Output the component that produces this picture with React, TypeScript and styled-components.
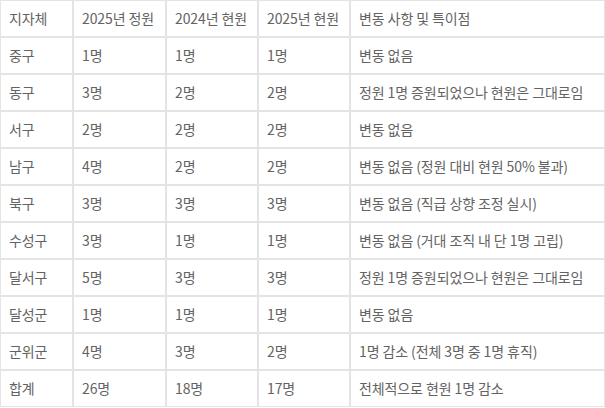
import React from "react";
import styled, { createGlobalStyle } from "styled-components";

const GlobalStyle = createGlobalStyle`
  html, body {
    margin: 0;
    padding: 0;
    background: #ffffff;
  }
  * {
    box-sizing: border-box;
  }
`;

type Row = {
  region: string;
  quota: string;
  prev: string;
  current: string;
  note: string;
};

const rows: Row[] = [
  { region: "중구", quota: "1명", prev: "1명", current: "1명", note: "변동 없음" },
  { region: "동구", quota: "3명", prev: "2명", current: "2명", note: "정원 1명 증원되었으나 현원은 그대로임" },
  { region: "서구", quota: "2명", prev: "2명", current: "2명", note: "변동 없음" },
  { region: "남구", quota: "4명", prev: "2명", current: "2명", note: "변동 없음 (정원 대비 현원 50% 불과)" },
  { region: "북구", quota: "3명", prev: "3명", current: "3명", note: "변동 없음 (직급 상향 조정 실시)" },
  { region: "수성구", quota: "3명", prev: "1명", current: "1명", note: "변동 없음 (거대 조직 내 단 1명 고립)" },
  { region: "달서구", quota: "5명", prev: "3명", current: "3명", note: "정원 1명 증원되었으나 현원은 그대로임" },
  { region: "달성군", quota: "1명", prev: "1명", current: "1명", note: "변동 없음" },
  { region: "군위군", quota: "4명", prev: "3명", current: "2명", note: "1명 감소 (전체 3명 중 1명 휴직)" },
  { region: "합계", quota: "26명", prev: "18명", current: "17명", note: "전체적으로 현원 1명 감소" },
];

const columns = [
  { label: "지자체", width: 73 },
  { label: "2025년 정원", width: 93 },
  { label: "2024년 현원", width: 92 },
  { label: "2025년 현원", width: 92 },
  { label: "변동 사항 및 특이점", width: 255 },
];

const Table = styled.table`
  width: 605px;
  table-layout: fixed;
  border-collapse: separate;
  border-spacing: 0;
  font-family: "Noto Sans CJK KR", "Noto Sans", sans-serif;
  font-size: 14px;
  color: #636363;
`;

const Cell = styled.td<{ $w?: number }>`
  width: ${(p) => (p.$w ? `${p.$w}px` : "auto")};
  height: 37px;
  padding: 0 0 1px 8px;
  border: 1px solid #e4e4e4;
  text-align: left;
  vertical-align: middle;
  font-weight: 400;
  white-space: nowrap;
  letter-spacing: -0.1px;
`;

const HeadCell = styled(Cell).attrs({ as: "th" })``;

export default function App() {
  return (
    <>
      <GlobalStyle />
      <Table>
        <thead>
          <tr>
            {columns.map((c) => (
              <HeadCell key={c.label} $w={c.width}>
                {c.label}
              </HeadCell>
            ))}
          </tr>
        </thead>
        <tbody>
          {rows.map((r) => (
            <tr key={r.region}>
              <Cell>{r.region}</Cell>
              <Cell>{r.quota}</Cell>
              <Cell>{r.prev}</Cell>
              <Cell>{r.current}</Cell>
              <Cell>{r.note}</Cell>
            </tr>
          ))}
        </tbody>
      </Table>
    </>
  );
}
